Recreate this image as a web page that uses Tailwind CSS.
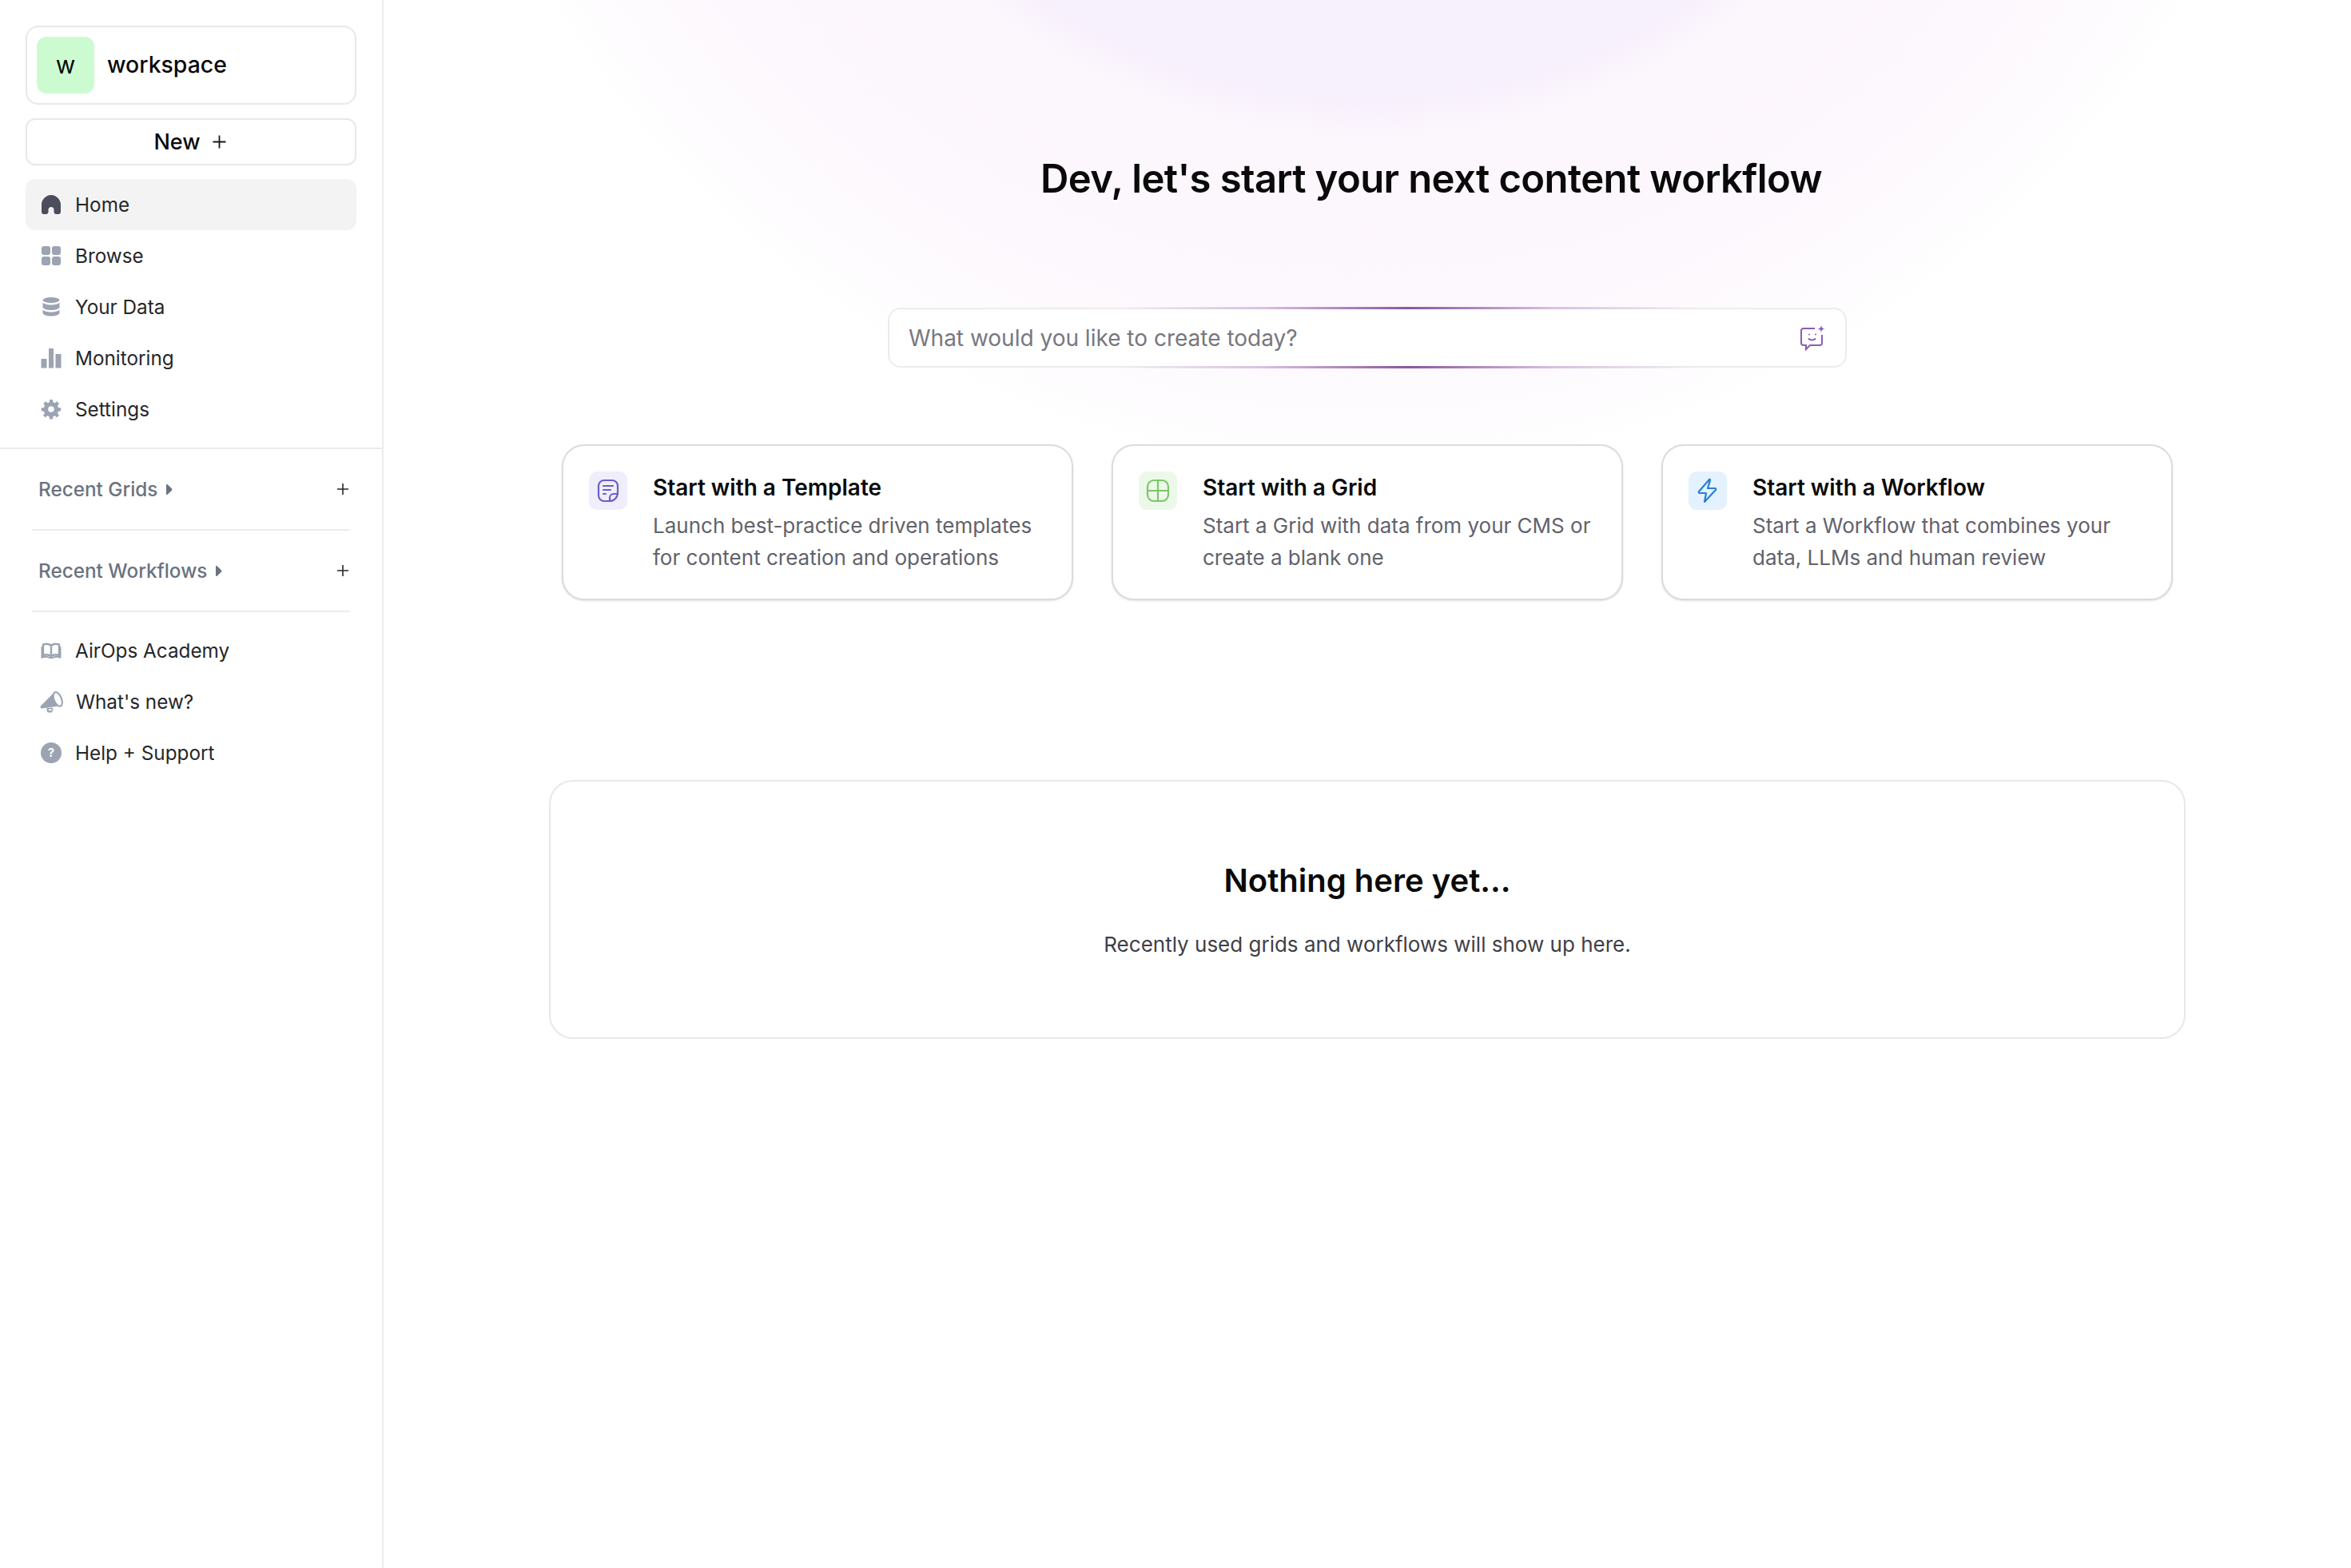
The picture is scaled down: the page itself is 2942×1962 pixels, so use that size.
<!DOCTYPE html>
<html lang="en">
<head>
    <meta charset="UTF-8">
    <meta name="viewport" content="width=device-width, initial-scale=1.0">
    <title>Home - AirOps</title>
    <script src="https://cdn.jsdelivr.net/npm/@tailwindcss/browser@4"></script>
</head>
<body class="bg-white font-['Inter',sans-serif] text-[#18181b]">
    <div class="flex h-[1962px] overflow-hidden">
        <!-- Sidebar -->
        <aside class="w-[480px] shrink-0 border-r-2 border-[#ececee] flex flex-col">
            <div class="px-[32px] pt-[32px]">
                <div class="h-[99px] border-2 border-[#e8e8ea] rounded-[16px] flex items-center pl-[12px] gap-[16px]">
                    <div class="w-[72px] h-[71px] rounded-[12px] bg-[#ccfbd1] flex items-center justify-center text-[30px] text-[#0a0a0a]">w</div>
                    <span class="text-[28.400px] font-medium text-[#0a0a0a]">workspace</span>
                </div>
                <div class="mt-[17px] h-[59px] border-2 border-[#e8e8ea] rounded-[12px] flex items-center justify-center gap-[15px] pr-[3px] text-[27px] font-medium text-[#0a0a0a]">
                    <span class="relative top-[1px]">New</span>
                    <svg class="w-[17px] h-[17px]" viewBox="0 0 17 17" fill="none" stroke="#18181b" stroke-width="1.800"><path d="M8.500 0.500v16M0.500 8.500h16"/></svg>
                </div>
                <nav class="mt-[17px] flex flex-col text-[24.300px]">
                    <a class="h-[64px] rounded-[12px] bg-[#f3f3f4] flex items-center pl-[19px] gap-[17px] text-[#27272a]">
                        <svg class="w-[26px] h-[26px]" viewBox="0 0 26 26" fill="#4b4d5c"><path d="M13 1C6.500 1 1 7 1 12.500V22C1 23.800 2.300 25 4 25H6.500C8.200 25 9.500 23.800 9.500 22V19.500C9.500 17.500 11 16 13 16S16.500 17.500 16.500 19.500V22C16.500 23.800 17.800 25 19.500 25H22C23.700 25 25 23.800 25 22V12.500C25 7 19.500 1 13 1Z"/></svg>
                        Home
                    </a>
                    <a class="h-[64px] flex items-center pl-[19px] gap-[17px] text-[#27272a]">
                        <svg class="w-[26px] h-[26px]" viewBox="0 0 26 26" fill="#9ca3b2"><rect x="1" y="1" width="11" height="11" rx="3"/><rect x="14" y="1" width="11" height="11" rx="3"/><rect x="1" y="14" width="11" height="11" rx="3"/><rect x="14" y="14" width="11" height="11" rx="3"/></svg>
                        Browse
                    </a>
                    <a class="h-[64px] flex items-center pl-[19px] gap-[17px] text-[#27272a]">
                        <svg class="w-[26px] h-[26px]" viewBox="0 0 26 26" fill="#9ca3b2"><ellipse cx="13" cy="4.500" rx="10.500" ry="3.500"/><path d="M2.500 7.500C4 9.500 8 10.500 13 10.500S22 9.500 23.500 7.500V13.500C23 15.500 18.500 17 13 17S3 15.500 2.500 13.500Z"/><path d="M2.500 16.500C4 18.500 8 19.500 13 19.500S22 18.500 23.500 16.500V20.500C23 23 18.500 24.500 13 24.500S3 23 2.500 20.500Z"/></svg>
                        Your Data
                    </a>
                    <a class="h-[64px] flex items-center pl-[19px] gap-[17px] text-[#27272a]">
                        <svg class="w-[26px] h-[26px]" viewBox="0 0 26 26" fill="#9ca3b2"><rect x="0.500" y="14" width="7" height="11.500"/><rect x="10" y="1" width="6" height="24.500"/><rect x="18.500" y="8" width="7" height="17.500"/></svg>
                        Monitoring
                    </a>
                    <a class="h-[64px] flex items-center pl-[19px] gap-[17px] text-[#27272a]">
                        <svg class="w-[26px] h-[26px]" viewBox="0 0 24 24" fill="#9ca3b2"><path fill-rule="evenodd" d="M10.300 1h3.400l.5 3a8 8 0 0 1 2.100.9l2.500-1.800 2.400 2.400-1.800 2.500c.4.700.7 1.400.9 2.100l3 .5v3.400l-3 .5a8 8 0 0 1-.9 2.100l1.800 2.500-2.400 2.400-2.500-1.800a8 8 0 0 1-2.100.9l-.5 3h-3.400l-.5-3a8 8 0 0 1-2.100-.9l-2.500 1.800-2.400-2.400 1.800-2.500a8 8 0 0 1-.9-2.100l-3-.5v-3.400l3-.5c.2-.7.5-1.400.9-2.100L3.200 5.500l2.400-2.400 2.500 1.800a8 8 0 0 1 2.100-.9ZM12 8.500a3.500 3.500 0 1 0 0 7 3.500 3.500 0 0 0 0-7Z"/></svg>
                        Settings
                    </a>
                </nav>
            </div>

            <div class="mt-[16px] border-t-2 border-[#ececee]"></div>

            <div class="px-[40px] text-[#6b7280] font-medium text-[24.300px]">
                <div class="h-[102px] flex items-center justify-between pl-[8px] pr-[2px] border-b-2 border-[#ececee]">
                    <span class="flex items-center gap-[10px]">Recent Grids
                        <svg class="w-[9px] h-[15px]" viewBox="0 0 9 14" fill="#6b7280"><path d="M1 1.500C1 .500 2 .200 2.700.800L8 6c.6.600.6 1.400 0 2l-5.300 5.200C2 13.800 1 13.500 1 12.500Z"/></svg>
                    </span>
                    <svg class="w-[14px] h-[14px]" viewBox="0 0 14 14" fill="none" stroke="#27272a" stroke-width="1.600"><path d="M7 0v14M0 7h14"/></svg>
                </div>
                <div class="h-[102px] flex items-center justify-between pl-[8px] pr-[2px] border-b-2 border-[#ececee]">
                    <span class="flex items-center gap-[10px]">Recent Workflows
                        <svg class="w-[9px] h-[15px]" viewBox="0 0 9 14" fill="#6b7280"><path d="M1 1.500C1 .500 2 .200 2.700.800L8 6c.6.600.6 1.400 0 2l-5.300 5.200C2 13.800 1 13.500 1 12.500Z"/></svg>
                    </span>
                    <svg class="w-[14px] h-[14px]" viewBox="0 0 14 14" fill="none" stroke="#27272a" stroke-width="1.600"><path d="M7 0v14M0 7h14"/></svg>
                </div>
            </div>

            <nav class="px-[32px] mt-[16px] flex flex-col text-[24.300px] text-[#27272a]">
                <a class="h-[64px] flex items-center pl-[19px] gap-[17px]">
                    <svg class="w-[26px] h-[26px]" viewBox="0 0 26 26" fill="none" stroke="#9ca3b2" stroke-width="2.400"><path d="M3 5.500C6 4.500 10 4.500 13 6.500C16 4.500 20 4.500 23 5.500V19C20 18 16 18 13 20C10 18 6 18 3 19Z"/><path d="M13 6.500V20"/><path d="M1.500 8V21.500C5 20.500 9 20.500 11 22H15C17 20.500 21 20.500 24.500 21.500V8" stroke-width="2"/></svg>
                    AirOps Academy
                </a>
                <a class="h-[64px] flex items-center pl-[18px] gap-[16px]">
                    <svg class="w-[29px] h-[27px]" viewBox="0 0 28 26" fill="#9ca3b2"><path d="M17.500 1 1 17.500c-1 1-.5 2.800 1 3.200l19-2.700Z"/><ellipse cx="21.500" cy="9.500" rx="4.500" ry="9" transform="rotate(-22 21.500 9.500)" fill="#fff" stroke="#9ca3b2" stroke-width="2"/><path d="M8 20h8l-1 4.500a1.500 1.500 0 0 1-1.500 1H10c-1 0-1.700-.8-1.500-1.800Z"/><rect x="10.500" y="21.500" width="3.500" height="1.800" fill="#fff"/></svg>
                    What's new?
                </a>
                <a class="h-[64px] flex items-center pl-[19px] gap-[17px]">
                    <span class="w-[26px] h-[26px] rounded-full bg-[#9ca3b2] flex items-center justify-center text-white text-[15px] font-bold">?</span>
                    Help + Support
                </a>
            </nav>
        </aside>

        <!-- Main -->
        <main class="flex-1 flex flex-col items-center bg-[radial-gradient(circle_1190px_at_1231px_-600px,#f7f0fd_0%,#f7f0fd_60%,#fcf6fd_65%,#fdf8fd_84%,#fefcfe_95%,#ffffff_100%)]">
            <h1 class="mt-[193px] ml-[160px] h-[62px] leading-[62px] text-[49px] font-semibold text-[#0a0a0a] tracking-[-0.6px]">Dev, let's start your next content workflow</h1>

            <div class="relative mt-[130px] w-[1200px] h-[75px] bg-white border-2 border-[#ececee] rounded-[16px] flex items-center justify-between pl-[24px] pr-[24px]">
                <span class="text-[28px] text-[#77777f]">What would you like to create today?</span>
                <svg class="w-[34px] h-[34px]" viewBox="0 0 34 34" fill="none" stroke="#8e5bb5" stroke-width="2"><path d="M20 5H6a3 3 0 0 0-3 3v15a3 3 0 0 0 3 3h3v5l5-5h12a3 3 0 0 0 3-3V13"/><circle cx="13" cy="12.500" r="1" fill="#8e5bb5" stroke="none"/><circle cx="21" cy="12.500" r="1" fill="#8e5bb5" stroke="none"/><path d="M12.500 18c2 2 6 2 8 0" stroke-linecap="round"/><path d="M28 1c.5 3 1.500 4 4.500 4.500-3 .5-4 1.500-4.500 4.500-.5-3-1.500-4-4.500-4.500 3-.5 4-1.500 4.500-4.500Z" fill="#8e5bb5" stroke="none"/></svg>
                <div class="absolute left-[290px] top-[-3px] w-[720px] h-[3px] bg-[linear-gradient(90deg,transparent,#d8c0e0_25%,#8b57a0_50%,#d8c0e0_75%,transparent)]"></div>
                <div class="absolute left-[290px] bottom-[-3px] w-[720px] h-[3px] bg-[linear-gradient(90deg,transparent,#d8c0e0_25%,#8b57a0_50%,#d8c0e0_75%,transparent)]"></div>
            </div>

            <div class="mt-[96px] flex gap-[48px]">
                <div class="w-[640px] h-[195px] bg-white border-2 border-[#dcdcde] rounded-[28px] shadow-sm flex pl-[32px] pt-[32px] gap-[32px]">
                    <div class="w-[48px] h-[48px] rounded-[10px] bg-[#f0eefc] flex items-center justify-center shrink-0">
                        <svg class="w-[30px] h-[30px]" viewBox="0 0 30 30" fill="none" stroke="#6a5fc9" stroke-width="2.200" stroke-linecap="round"><path d="M17 28H10a7 7 0 0 1-7-7V9a7 7 0 0 1 7-7h10a7 7 0 0 1 7 7v8c0 6-4 11-10 11Z"/><path d="M9 9h12M9 14h9M9 19h3"/><path d="M17 28v-4a5 5 0 0 1 5-5h5"/></svg>
                    </div>
                    <div>
                        <div class="text-[28px] font-semibold text-[#0a0a0a] leading-[40px]">Start with a Template</div>
                        <p class="mt-[8px] text-[26px] leading-[40px] text-[#62626b]">Launch best-practice driven templates<br>for content creation and operations</p>
                    </div>
                </div>
                <div class="w-[640px] h-[195px] bg-white border-2 border-[#dcdcde] rounded-[28px] shadow-sm flex pl-[32px] pt-[32px] gap-[32px]">
                    <div class="w-[48px] h-[48px] rounded-[10px] bg-[#edf9e8] flex items-center justify-center shrink-0">
                        <svg class="w-[30px] h-[30px]" viewBox="0 0 30 30" fill="none" stroke="#7cc76a" stroke-width="2.200"><rect x="2" y="2" width="26" height="26" rx="8"/><path d="M15 2v26M2 15h26"/></svg>
                    </div>
                    <div>
                        <div class="text-[28px] font-semibold text-[#0a0a0a] leading-[40px]">Start with a Grid</div>
                        <p class="mt-[8px] text-[26px] leading-[40px] text-[#62626b]">Start a Grid with data from your CMS or<br>create a blank one</p>
                    </div>
                </div>
                <div class="w-[640px] h-[195px] bg-white border-2 border-[#dcdcde] rounded-[28px] shadow-sm flex pl-[32px] pt-[32px] gap-[32px]">
                    <div class="w-[48px] h-[48px] rounded-[10px] bg-[#e3f2fe] flex items-center justify-center shrink-0">
                        <svg class="w-[30px] h-[32px]" viewBox="0 0 30 32" fill="none" stroke="#2b7fd4" stroke-width="2.200" stroke-linejoin="round"><path d="M17 2 4 17c-.8 1 0 2 1 2h8l-2 11 14-15c.8-1 0-2-1-2h-9l3-10c.3-1.200-.5-1.500-1-1Z"/></svg>
                    </div>
                    <div>
                        <div class="text-[28px] font-semibold text-[#0a0a0a] leading-[40px]">Start with a Workflow</div>
                        <p class="mt-[8px] text-[26px] leading-[40px] text-[#62626b]">Start a Workflow that combines your<br>data, LLMs and human review</p>
                    </div>
                </div>
            </div>

            <div class="mt-[225px] w-[2048px] h-[324px] border-2 border-[#e8e8ea] rounded-[30px] flex flex-col items-center">
                <div class="mt-[96px] text-[40px] leading-[56px] font-semibold text-[#0a0a0a]">Nothing here yet...</div>
                <p class="mt-[32px] text-[26px] leading-[40px] text-[#3f3f46]">Recently used grids and workflows will show up here.</p>
            </div>
        </main>
    </div>
</body>
</html>
